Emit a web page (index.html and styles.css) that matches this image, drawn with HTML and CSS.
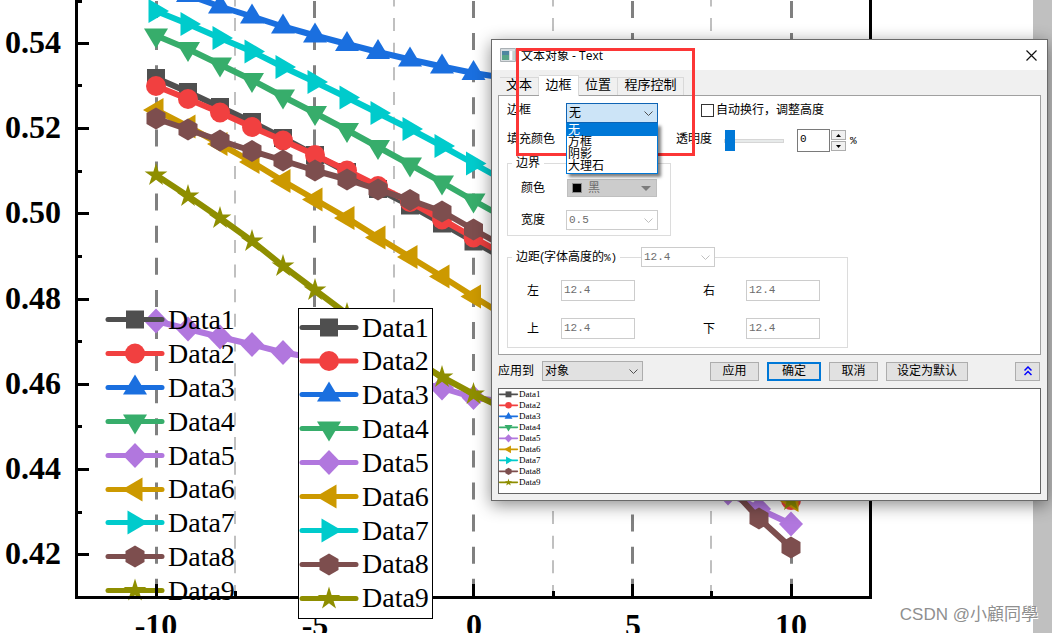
FILE: index.html
```html
<!DOCTYPE html>
<html lang="zh-CN">
<head>
<meta charset="utf-8">
<title>文本对象 - Text</title>
<link rel="stylesheet" href="styles.css">
</head>
<body>
<main class="workspace">
  <svg class="chart" width="1033" height="660" viewBox="0 0 1033 660" role="img" aria-label="Data1 - Data9">
    <defs>
      <path id="s1" fill="#4f4f4f" d="M-9-9H9V9H-9z"/>
      <circle id="s2" fill="#f14040" r="10"/>
      <path id="s3" fill="#1a6fdf" d="M0-13 12 7H-12z"/>
      <path id="s4" fill="#37ad6b" d="M0 13 12-7H-12z"/>
      <path id="s5" fill="#b177de" d="M0-12.500 12 0 0 12.500-12 0z"/>
      <path id="s6" fill="#cc9900" d="M-13 0 7.500-12V12z"/>
      <path id="s7" fill="#00cbcc" d="M13 0-7.500-12V12z"/>
      <path id="s8" fill="#7d4e4e" d="M0-11 9.500-5.500V5.500L0 11-9.500 5.500V-5.500z"/>
      <path id="s9" fill="#8e8e00" d="M0-12 2.600-3.600H11.400L4.300 1.500 7 10 0 4.800-7 10-4.300 1.500-11.400-3.600H-2.600z"/>
      <marker id="m1" class="mark" markerUnits="userSpaceOnUse"><use href="#s1"/></marker>
      <marker id="m2" class="mark" markerUnits="userSpaceOnUse"><use href="#s2"/></marker>
      <marker id="m3" class="mark" markerUnits="userSpaceOnUse"><use href="#s3"/></marker>
      <marker id="m4" class="mark" markerUnits="userSpaceOnUse"><use href="#s4"/></marker>
      <marker id="m5" class="mark" markerUnits="userSpaceOnUse"><use href="#s5"/></marker>
      <marker id="m6" class="mark" markerUnits="userSpaceOnUse"><use href="#s6"/></marker>
      <marker id="m7" class="mark" markerUnits="userSpaceOnUse"><use href="#s7"/></marker>
      <marker id="m8" class="mark" markerUnits="userSpaceOnUse"><use href="#s8"/></marker>
      <marker id="m9" class="mark" markerUnits="userSpaceOnUse"><use href="#s9"/></marker>
      <g id="k1"><path class="key c1" d="M-27 0H27"/><use href="#s1"/></g>
      <g id="k2"><path class="key c2" d="M-27 0H27"/><use href="#s2"/></g>
      <g id="k3"><path class="key c3" d="M-27 0H27"/><use href="#s3"/></g>
      <g id="k4"><path class="key c4" d="M-27 0H27"/><use href="#s4"/></g>
      <g id="k5"><path class="key c5" d="M-27 0H27"/><use href="#s5"/></g>
      <g id="k6"><path class="key c6" d="M-27 0H27"/><use href="#s6"/></g>
      <g id="k7"><path class="key c7" d="M-27 0H27"/><use href="#s7"/></g>
      <g id="k8"><path class="key c8" d="M-27 0H27"/><use href="#s8"/></g>
      <g id="k9"><path class="key c9" d="M-27 0H27"/><use href="#s9"/></g>
    </defs>

    <path class="grid-major" d="M156.500 1V597M314.500 1V597M473.500 1V597M632.500 1V597M791.500 1V597"/>
    <path class="grid-minor" d="M235-6.600V597M394-6.600V597M553-6.600V597M711-6.600V597"/>

    <polyline class="line c1" style="marker:url(#m1)" points="156,78 188,92 220,107 252,122 283,138 315,155 347,172 378,189 410,205.500 442,223.500 473.500,241.500 505,259"/>
    <polyline class="line c2" style="marker:url(#m2)" points="156,86 188,99 220,112.500 252,127 283,140.500 315,155 347,170.500 378,186 410,202 442,219.500 473.500,237.500 505,255 791,500"/>
    <polyline class="line c3" style="marker:url(#m3)" points="156,-16 188,-5 220,6.500 252,16.500 283,26.500 315,35.500 347,44 378,52 410,59.500 442,66.500 473.500,73 505,78"/>
    <polyline class="line c4" style="marker:url(#m4)" points="156,35.500 188,49 220,64.500 252,80 283,96.500 315,113 347,130 378,147 410,164.500 442,182.500 473.500,200.500 505,218"/>
    <polyline class="line c5" style="marker:url(#m5)" points="156,321 188,329 220,337 252,344.500 283,352.500 315,358 347,366 378,374 410,381 442,388 473.500,397.500 505,402 728,493 759,509 791,524"/>
    <polyline class="line c6" style="marker:url(#m6)" points="156,110 188,126.500 220,144 252,162 283,181 315,199.500 347,218 378,237.500 410,257 442,276.500 473.500,296.500 505,316 791,500"/>
    <polyline class="line c7" style="marker:url(#m7)" points="156,11 188,24 220,38 252,51.500 283,67 315,82 347,97.500 378,113 410,129 442,146 473.500,163.500 505,181"/>
    <polyline class="line c8" style="marker:url(#m8)" points="156,118.500 188,129.500 220,140.500 252,151 283,160.500 315,170.500 347,179.500 378,189.500 410,200 442,211.500 473.500,229.500 505,247 728,485 759,518.500 791,547.500"/>
    <polyline class="line c9" style="marker:url(#m9)" points="156,175 188,196 220,218 252,241 283,266 315,290 347,314 378,336 410,357 442,377 473.500,394 505,409 791,500"/>

    <g class="legend-text">
      <use href="#k1" x="135" y="319.500"/><text x="168" y="329">Data1</text>
      <use href="#k2" x="135" y="353.500"/><text x="168" y="363">Data2</text>
      <use href="#k3" x="135" y="387.500"/><text x="168" y="397">Data3</text>
      <use href="#k4" x="135" y="421.500"/><text x="168" y="431">Data4</text>
      <use href="#k5" x="135" y="455.500"/><text x="168" y="465">Data5</text>
      <use href="#k6" x="135" y="489.500"/><text x="168" y="498">Data6</text>
      <use href="#k7" x="135" y="522.500"/><text x="168" y="532">Data7</text>
      <use href="#k8" x="135" y="556.500"/><text x="168" y="566">Data8</text>
      <use href="#k9" x="135" y="590.500"/><text x="168" y="600">Data9</text>
    </g>

    <path class="axis" d="M76.500 0V597.500H870.500V0"/>
    <path class="axis" d="M78 43.500H89M78 128.500H89M78 213.500H89M78 299.500H89M78 384.500H89M78 469.500H89M78 554.500H89M156.500 596V584M314.500 596V584M473.500 596V584M632.500 596V584M791.500 596V584"/>
    <path class="axis" d="M78 1.500H82M78 85.500H82M78 171.500H82M78 256.500H82M78 341.500H82M78 426.500H82M78 512.500H82M235.500 596V591M394.500 596V591M553.500 596V591M711.500 596V591"/>

    <g class="tick-y">
      <text x="61" y="53">0.54</text><text x="61" y="138">0.52</text><text x="61" y="223">0.50</text>
      <text x="61" y="309">0.48</text><text x="61" y="394">0.46</text><text x="61" y="479">0.44</text><text x="61" y="564">0.42</text>
    </g>
    <g class="tick-x">
      <text x="156" y="636">-10</text><text x="315" y="636">-5</text><text x="474" y="636">0</text><text x="633" y="636">5</text><text x="791" y="636">10</text>
    </g>

    <rect class="legend-box" x="298.500" y="308.500" width="134" height="310"/>
    <g class="legend-text">
      <use href="#k1" x="329" y="327.500"/><text x="362" y="337">Data1</text>
      <use href="#k2" x="329" y="361"/><text x="362" y="370">Data2</text>
      <use href="#k3" x="329" y="394.500"/><text x="362" y="404">Data3</text>
      <use href="#k4" x="329" y="428.500"/><text x="362" y="438">Data4</text>
      <use href="#k5" x="329" y="462.500"/><text x="362" y="472">Data5</text>
      <use href="#k6" x="329" y="496.500"/><text x="362" y="506">Data6</text>
      <use href="#k7" x="329" y="530.500"/><text x="362" y="540">Data7</text>
      <use href="#k8" x="329" y="564.500"/><text x="362" y="573">Data8</text>
      <use href="#k9" x="329" y="598.500"/><text x="362" y="607">Data9</text>
    </g>
  </svg>

  <section class="dialog" role="dialog" aria-labelledby="dlg-title">
    <header class="titlebar">
      <svg class="app-icon" width="16" height="14" viewBox="0 0 16 14" aria-hidden="true">
        <path fill="#d8dde0" stroke="#aab0b4" d="M.5.500h15v13H.5z"/>
        <path fill="#4f87a0" d="M2 3h7v4H2z"/><path fill="#58a587" d="M2 7h7v5H2z"/>
        <path fill="#fff" d="M10 3h2v9h-2z"/><path fill="#c3d3cf" d="M13 3h2v9h-2z"/>
      </svg>
      <h1 class="title" id="dlg-title">文本对象 - Text</h1>
      <button class="close" type="button" aria-label="关闭">
        <svg width="11" height="11" viewBox="0 0 11 11"><path d="M.5.500l10 10M10.500.500l-10 10" fill="none" stroke="#111" stroke-width="1.200"/></svg>
      </button>
    </header>

    <div class="tabs" role="tablist">
      <button class="tab" type="button" role="tab">文本</button>
      <button class="tab tab-on" type="button" role="tab" aria-selected="true">边框</button>
      <button class="tab" type="button" role="tab">位置</button>
      <button class="tab tab-wide" type="button" role="tab">程序控制</button>
    </div>

    <div class="panel" role="tabpanel">
      <div class="row row-frame">
        <label class="lead" for="frame">边框</label>
        <div class="combo combo-open">
          <select id="frame"><option>无</option></select>
          <svg class="chev" width="9" height="5" viewBox="0 0 9 5"><path d="M.5.500l4 4 4-4"/></svg>
          <ul class="options" role="listbox" aria-label="边框">
            <li class="option option-on" role="option" aria-selected="true">无</li>
            <li class="option" role="option">方框</li>
            <li class="option" role="option">阴影</li>
            <li class="option" role="option">大理石</li>
          </ul>
        </div>
        <label class="wrap-check"><input class="check" type="checkbox">自动换行，调整高度</label>
      </div>

      <div class="row row-fill">
        <span class="fill-label">填充颜色</span>
        <label class="alpha-label" for="alpha">透明度</label>
        <input class="slider" id="alpha" type="range" min="0" max="100" value="0">
        <input class="alpha-value" type="text" value="0" aria-label="透明度 %">
        <div class="spin">
          <button type="button" aria-label="增加"><svg width="5" height="3" viewBox="0 0 5 3"><path d="M0 3h5L2.500 0z"/></svg></button>
          <button type="button" aria-label="减少"><svg width="5" height="3" viewBox="0 0 5 3"><path d="M0 0h5L2.500 3z"/></svg></button>
        </div>
        <span class="mono">%</span>
      </div>

      <fieldset class="group group-edge">
        <legend class="legend">边界</legend>
        <div class="edge-grid">
          <label for="color">颜色</label>
          <div class="combo combo-color">
            <span class="swatch"></span>
            <select id="color" disabled><option>黑</option></select>
            <svg class="chev-solid" width="10" height="5" viewBox="0 0 10 5"><path d="M0 0h10L5 5z"/></svg>
          </div>
          <label for="width">宽度</label>
          <div class="combo combo-off">
            <select id="width" disabled><option>0.5</option></select>
            <svg class="chev" width="9" height="5" viewBox="0 0 9 5"><path d="M.5.500l4 4 4-4"/></svg>
          </div>
        </div>
      </fieldset>

      <fieldset class="group group-margin">
        <legend class="legend legend-row">
          <label for="margin">边距(字体高度的<span class="mono">%)</span></label>
          <span class="rule"></span>
          <span class="combo combo-off combo-small">
            <select id="margin" disabled><option>12.4</option></select>
            <svg class="chev" width="9" height="5" viewBox="0 0 9 5"><path d="M.5.500l4 4 4-4"/></svg>
          </span>
        </legend>
        <div class="margin-grid">
          <label for="ml">左</label><input class="field" id="ml" type="text" value="12.4" disabled>
          <label class="second" for="mr">右</label><input class="field" id="mr" type="text" value="12.4" disabled>
          <label for="mt">上</label><input class="field" id="mt" type="text" value="12.4" disabled>
          <label class="second" for="mb">下</label><input class="field" id="mb" type="text" value="12.4" disabled>
        </div>
      </fieldset>
    </div>

    <div class="actions">
      <label for="target">应用到</label>
      <div class="combo combo-target">
        <select id="target"><option>对象</option></select>
        <svg class="chev" width="9" height="5" viewBox="0 0 9 5"><path d="M.5.500l4 4 4-4"/></svg>
      </div>
      <div class="buttons">
        <button class="btn" type="button">应用</button>
        <button class="btn btn-ok" type="button">确定</button>
        <button class="btn" type="button">取消</button>
        <button class="btn btn-wide" type="button">设定为默认</button>
      </div>
      <button class="btn btn-fold" type="button" aria-label="收起">
        <svg width="8" height="10" viewBox="0 0 8 10"><path d="M.5 4.500L4 1l3.500 3.500M.5 9L4 5.500 7.500 9" fill="none" stroke="#00f" stroke-width="1.500"/></svg>
      </button>
    </div>

    <ul class="preview">
      <li><svg class="mini" viewBox="-29 -16 58 33"><use href="#k1"/></svg>Data1</li>
      <li><svg class="mini" viewBox="-29 -16 58 33"><use href="#k2"/></svg>Data2</li>
      <li><svg class="mini" viewBox="-29 -16 58 33"><use href="#k3"/></svg>Data3</li>
      <li><svg class="mini" viewBox="-29 -16 58 33"><use href="#k4"/></svg>Data4</li>
      <li><svg class="mini" viewBox="-29 -16 58 33"><use href="#k5"/></svg>Data5</li>
      <li><svg class="mini" viewBox="-29 -16 58 33"><use href="#k6"/></svg>Data6</li>
      <li><svg class="mini" viewBox="-29 -16 58 33"><use href="#k7"/></svg>Data7</li>
      <li><svg class="mini" viewBox="-29 -16 58 33"><use href="#k8"/></svg>Data8</li>
      <li><svg class="mini" viewBox="-29 -16 58 33"><use href="#k9"/></svg>Data9</li>
    </ul>
  </section>

  <div class="callout"></div>
  <p class="watermark">CSDN @小顧同學</p>
</main>
</body>
</html>
```
FILE: styles.css
```css
* { box-sizing: border-box; }

body {
  margin: 0;
  background: #c0c0c0;
  color: #000;
  font: 12px/16px "Liberation Sans", "Noto Sans CJK SC", sans-serif;
}

button, input, select { font: inherit; color: inherit; margin: 0; }

.workspace {
  position: relative;
  height: 100vh;
  overflow: hidden;
}

/* chart */
.chart { display: block; background: #fff; }
.mark { overflow: visible; }
.line, .key { fill: none; }
.line { stroke-width: 6; stroke-linejoin: round; }
.key { stroke-width: 5; stroke-linecap: round; }
.c1 { stroke: #4f4f4f; }
.c2 { stroke: #f14040; }
.c3 { stroke: #1a6fdf; }
.c4 { stroke: #37ad6b; }
.c5 { stroke: #b177de; }
.c6 { stroke: #cc9900; }
.c7 { stroke: #00cbcc; }
.c8 { stroke: #7d4e4e; }
.c9 { stroke: #8e8e00; }
.grid-major { stroke: #808080; stroke-width: 3; stroke-dasharray: 17 15.1; }
.grid-minor { stroke: #c0c0c0; stroke-width: 2; stroke-dasharray: 13 11.650; }
.axis { fill: none; stroke: #000; stroke-width: 3; }
.legend-box { fill: #fff; stroke: #000; }
.legend-text { font: 28px "Liberation Serif", serif; }
.tick-y, .tick-x { font: bold 32px "Liberation Serif", serif; }
.tick-y { text-anchor: end; }
.tick-x { text-anchor: middle; }

/* dialog window */
.dialog {
  position: absolute;
  left: 491px;
  top: 39px;
  width: 557px;
  padding: 0 6px 6px;
  border: 1px solid #6a6a6a;
  background: #f0f0f0;
  box-shadow: 0 4px 16px rgba(0, 0, 0, .45);
}

.titlebar {
  display: flex;
  align-items: center;
  height: 30px;
  margin: 0 -6px;
  padding: 0 10px 0 8px;
  background: #fff;
}
.title {
  flex: 1;
  margin: 0 0 0 5px;
  padding-top: 2px;
  font: 12px/16px "Open Sans", "Noto Sans CJK SC", sans-serif;
}
.close { display: flex; padding: 0; border: 0; background: none; }

.tabs {
  display: flex;
  align-items: flex-end;
  height: 25px;
  padding-left: 2px;
}
.tab {
  width: 39px;
  height: 18px;
  padding: 0 0 3px;
  border: solid #d9d9d9;
  border-width: 1px 1px 0 0;
  background: #f0f0f0;
  font-size: 13px;
  line-height: 14px;
}
.tab-on {
  z-index: 1;
  width: 40px;
  height: 21px;
  margin-bottom: -1px;
  background: #fff;
}
.tab-wide { width: 66px; }

.panel {
  padding: 7px 8px 6px;
  border: 1px solid #a0a0a0;
  background: #fff;
}
.row { display: flex; align-items: center; }
.row-frame { height: 20px; }
.lead { width: 59px; padding-bottom: 6px; }

/* drop-downs */
.combo {
  position: relative;
  display: flex;
  align-items: center;
  width: 92px;
  height: 20px;
  border: 1px solid #ccc;
  background: #fff;
}
.combo select {
  width: 100%;
  height: 100%;
  padding: 0 0 0 2px;
  border: 0;
  background: none;
  appearance: none;
  opacity: 1;
}
.chev, .chev-solid { position: absolute; right: 4px; pointer-events: none; }
.chev { fill: none; stroke: #505050; }
.chev-solid { right: 5px; fill: #7c7c7c; }
.combo-open { border-color: #0f64b4; background: #cce4f7; }
.combo-off { color: #6d6d6d; }
.combo-off select { font: 11px/16px "Liberation Mono", monospace; }
.combo-off .chev { stroke: #bfbfbf; }
.combo-small { width: 74px; }
.combo-color {
  width: 90px;
  height: 18px;
  margin-left: 1px;
  border-color: #bfbfbf;
  background: #ccc;
  color: #6d6d6d;
}
.swatch { flex: none; width: 10px; height: 10px; margin: 0 4px; border: 1px solid #8c8c8c; background: #000; }
.combo-target { width: 101px; margin-left: 8px; border-color: #adadad; background: #e1e1e1; }

.options {
  position: absolute;
  z-index: 2;
  top: 19px;
  left: -1px;
  width: 92px;
  margin: 0;
  padding: 0 0 1px;
  border: 1px solid #0078d7;
  background: #fff;
  box-shadow: 3px 3px 3px rgba(0, 0, 0, .5);
  list-style: none;
}
.option { height: 12px; padding-left: 1px; line-height: 13px; }
.option-on { background: #0078d7; color: #fff; }

.wrap-check { display: flex; align-items: center; gap: 2px; margin-left: 43px; padding-bottom: 6px; }
.check { width: 13px; height: 13px; border: 1px solid #333; background: #fff; appearance: none; }

/* transparency */
.row-fill { height: 23px; margin-top: 6px; }
.fill-label { width: 169px; padding-bottom: 3px; }
.alpha-label { width: 48px; padding-bottom: 3px; }
.slider { width: 60px; height: 21px; background: none; appearance: none; }
.slider::-webkit-slider-runnable-track { height: 4px; border: 1px solid #d6d6d6; background: #e7eaea; }
.slider::-webkit-slider-thumb {
  width: 10px;
  height: 21px;
  margin-top: -10px;
  background: #0078d7;
  appearance: none;
}
.alpha-value {
  width: 33px;
  height: 23px;
  margin-left: 13px;
  padding: 0 2px 4px;
  border: 1px solid #7a7a7a;
  font: 11px/16px "Liberation Mono", monospace;
}
.spin { display: flex; flex-direction: column; gap: 1px; margin: 0 4px 0 1px; }
.spin button {
  display: flex;
  align-items: center;
  justify-content: center;
  width: 15px;
  height: 10px;
  padding: 0;
  border: 1px solid #adadad;
  background: #f0f0f0;
}
.mono { font: 11px/16px "Liberation Mono", monospace; }

/* groups */
.group { margin: 0; padding: 0; border: 1px solid #dcdcdc; }
.group-edge { width: 164px; margin-top: 3px; }
.group-margin { width: 341px; margin-top: 11px; }
.legend { margin-left: 4px; padding: 0 4px; }
.legend-row { display: flex; align-items: center; padding-right: 0; }
.legend-row label { width: 104px; white-space: nowrap; }
.rule { width: 21px; border-top: 1px solid #dcdcdc; }
.edge-grid {
  display: grid;
  grid-template-columns: 45px 92px;
  gap: 13px 0;
  align-items: center;
  padding: 8px 0 5px 13px;
}
.margin-grid {
  display: grid;
  grid-template-columns: 34px 74px 111px 74px;
  gap: 17px 0;
  align-items: center;
  padding: 13px 0 8px 19px;
}
.second { padding-left: 68px; }
.field {
  width: 100%;
  height: 21px;
  padding: 0 2px 2px;
  border: 1px solid #ccc;
  background: #fff;
  color: #6d6d6d;
  font: 11px/16px "Liberation Mono", monospace;
}

/* action bar */
.actions { display: flex; align-items: center; height: 20px; margin: 6px 0 7px; }
.buttons { display: flex; gap: 8px; margin-left: 67px; }
.btn {
  width: 49px;
  height: 19px;
  padding: 0;
  border: 1px solid #adadad;
  background: #e1e1e1;
  line-height: 16px;
}
.btn-ok { width: 54px; border: 2px solid #0078d7; line-height: 14px; }
.btn-wide { width: 82px; }
.btn-fold { display: flex; align-items: center; justify-content: center; width: 25px; margin-left: auto; margin-right: 1px; }

.preview {
  margin: 0;
  padding: 0 0 5px;
  border: 1px solid #646464;
  background: #fff;
  font: 9px/11px "Liberation Serif", serif;
  list-style: none;
}
.preview li { display: flex; align-items: center; gap: 1px; height: 11px; }
.mini { width: 19px; height: 11px; overflow: visible; }

/* overlays */
.callout {
  position: absolute;
  left: 516px;
  top: 48px;
  width: 179px;
  height: 108px;
  border: 3px solid #fc3636;
  pointer-events: none;
}
.watermark {
  position: absolute;
  right: 14px;
  bottom: 6px;
  margin: 0;
  color: #8f8f8f;
  font: 17px/24px "Liberation Sans", "Noto Sans CJK TC", sans-serif;
  text-shadow: 1px 1px 0 #fff;
}
```
